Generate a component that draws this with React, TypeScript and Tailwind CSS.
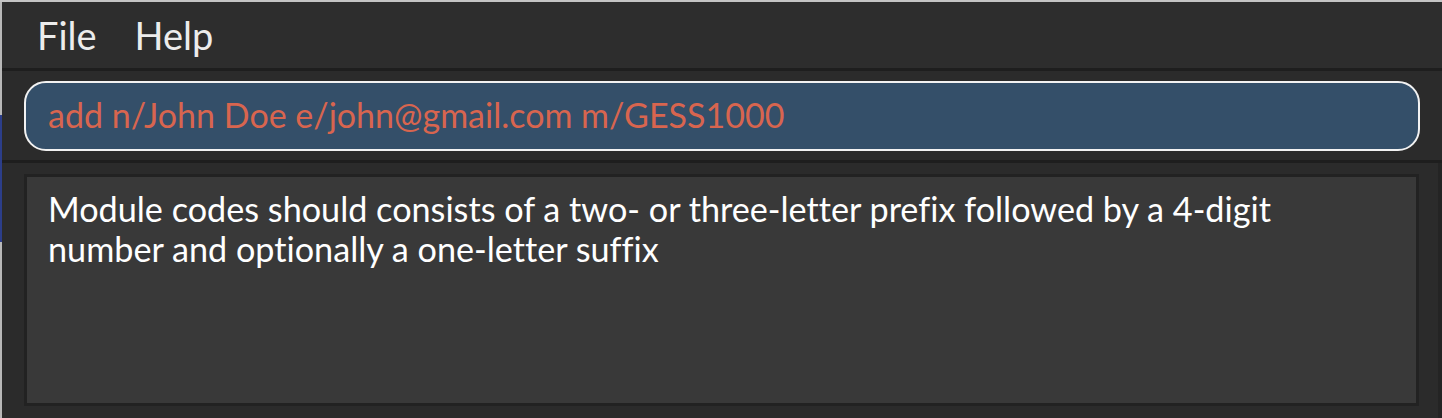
export default function App() {
    return (
        <div className="w-[1442px] h-[418px] overflow-hidden bg-[#2b2b2b] flex flex-col border-t-2 border-[#c4c4c4] font-['Lato','Noto_Sans',sans-serif] [font-variant-ligatures:none] relative">
            {/* window edge strip */}
            <div className="absolute left-0 top-0 bottom-0 w-[2px] bg-[#b8b8b8]">
                <div className="mt-[113px] h-[127px] bg-[#2c3e8a]"></div>
            </div>

            {/* Menu bar */}
            <div className="h-[66px] bg-[#2d2d2d] flex items-center pl-[37px] gap-[38px] text-[38px] text-[#ececec]">
                <span>File</span>
                <span>Help</span>
            </div>
            <div className="h-[3px] bg-[#1e1e1e]"></div>

            {/* Command box */}
            <div className="h-[89px] flex items-center pl-[24px] pr-[22px]">
                <div className="flex-1 h-[70px] rounded-[22px] border-2 border-[#f2f2f2] bg-[#344f69] flex items-center pl-[22px] pb-[2px] text-[34px] text-[#d8654f]">
                    add n/John Doe e/john@gmail.com m/GESS1000
                </div>
            </div>
            <div className="h-[3px] bg-[#1e1e1e]"></div>

            {/* Result display */}
            <div className="flex-1 pl-[24px] pr-[19px] pt-[11px] pb-[12px] flex border-r-4 border-[#242424]">
                <div className="flex-1 bg-[#393939] border-[3px] border-[#222222] pl-[21px] pt-[12px] text-[34.2px] leading-[40px] text-white">
                    Module codes should consists of a two- or three-letter prefix followed by a 4-digit
                    <br />
                    number and optionally a one-letter suffix
                </div>
            </div>
        </div>
    );
}
